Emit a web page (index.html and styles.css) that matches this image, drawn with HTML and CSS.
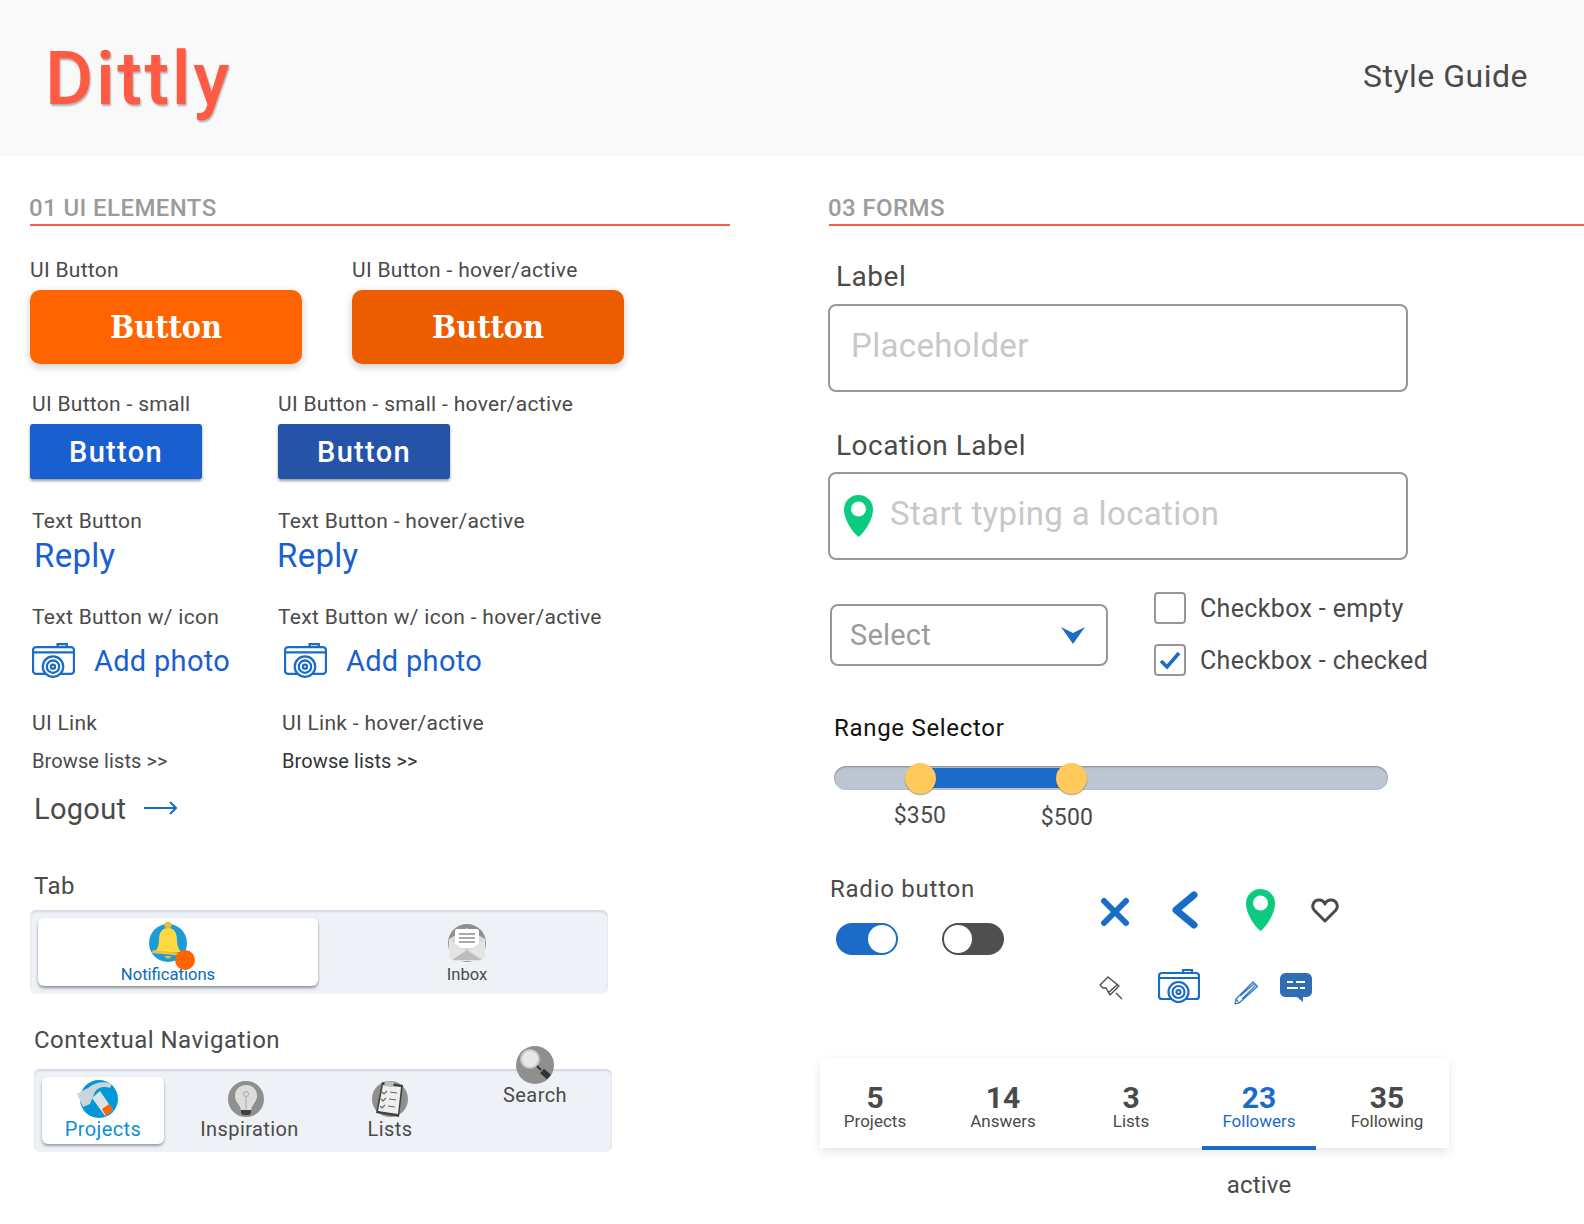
FILE: index.html
```html
<!DOCTYPE html>
<html lang="en">
<head>
    <meta charset="UTF-8">
    <title>Dittly Style Guide</title>
    <link rel="stylesheet" href="styles.css">
</head>
<body>
    <svg class="sprites" width="0" height="0">
        <symbol id="camera" viewBox="0 0 42 34">
            <g fill="none" stroke="currentColor" stroke-width="2.200">
                <rect x="1" y="4" width="40" height="26" rx="3"/>
                <path d="M1 9h40M25 4V1h9v3"/>
                <circle cx="20.500" cy="23" r="10" fill="#fff"/>
                <circle cx="20.500" cy="23" r="6"/>
                <circle cx="20.500" cy="23" r="2"/>
            </g>
        </symbol>
        <symbol id="pin" viewBox="0 0 29 42">
            <path fill="#0acb7e" d="M14.500 0C6.500 0 0 6.300 0 14.500 0 25 9 38 14.500 42 20 38 29 25 29 14.500 29 6.300 22.500 0 14.500 0z"/>
            <circle cx="14.500" cy="14" r="7.500" fill="#fff"/>
        </symbol>
    </svg>

    <header class="top-bar">
        <div class="logo">Dittly</div>
        <div class="guide-title">Style Guide</div>
    </header>

    <main class="columns">
        <section class="col-left">
            <h2 class="section-title">01 UI ELEMENTS</h2>

            <div class="demo-row row-buttons">
                <div>
                    <p class="demo-label">UI Button</p>
                    <a class="btn-large">Button</a>
                </div>
                <div>
                    <p class="demo-label">UI Button - hover/active</p>
                    <a class="btn-large hover">Button</a>
                </div>
            </div>

            <div class="demo-row row-small">
                <div>
                    <p class="demo-label inset">UI Button - small</p>
                    <a class="btn-small">Button</a>
                </div>
                <div>
                    <p class="demo-label">UI Button - small - hover/active</p>
                    <a class="btn-small hover">Button</a>
                </div>
            </div>

            <div class="demo-row row-text">
                <div>
                    <p class="demo-label inset">Text Button</p>
                    <a class="text-btn inset-more">Reply</a>
                </div>
                <div>
                    <p class="demo-label">Text Button - hover/active</p>
                    <a class="text-btn hover">Reply</a>
                </div>
            </div>

            <div class="demo-row row-icon">
                <div>
                    <p class="demo-label inset">Text Button w/ icon</p>
                    <a class="icon-btn inset">
                        <svg class="camera-icon"><use href="#camera"/></svg>
                        <span>Add photo</span>
                    </a>
                </div>
                <div>
                    <p class="demo-label">Text Button w/ icon - hover/active</p>
                    <a class="icon-btn second">
                        <svg class="camera-icon"><use href="#camera"/></svg>
                        <span>Add photo</span>
                    </a>
                </div>
            </div>

            <div class="demo-row row-link">
                <div>
                    <p class="demo-label inset">UI Link</p>
                    <a class="ui-link inset">Browse lists &gt;&gt;</a>
                </div>
                <div>
                    <p class="demo-label">UI Link - hover/active</p>
                    <a class="ui-link dark">Browse lists &gt;&gt;</a>
                </div>
            </div>

            <a class="logout">
                <span>Logout</span>
                <svg class="logout-arrow" width="33" height="14" viewBox="0 0 33 14" fill="none" stroke="#1a6cc8" stroke-width="2"><path d="M0 7h32M26 1l6 6-6 6"/></svg>
            </a>

            <h3 class="group-title tab-title">Tab</h3>
            <div class="tabs">
                <div class="tab active">
                    <span class="tab-icon">
                        <svg width="42" height="42" viewBox="0 0 42 42">
                            <circle cx="21" cy="23" r="19" fill="#1b9cd8"/>
                            <path fill="#ffd83f" d="M21 8c-7 0-9 6-9 12 0 6-2 9-4 12h26c-2-3-4-6-4-12 0-6-2-12-9-12z"/>
                            <path fill="#e9c23c" d="M6 30l30 3v3L5 33zM17 36h8l-4 3z"/>
                            <circle cx="21" cy="5" r="3.500" fill="#e9bc3a"/>
                        </svg>
                        <i class="badge"></i>
                    </span>
                    <span class="tab-text">Notifications</span>
                </div>
                <div class="tab inbox">
                    <span class="tab-icon">
                        <svg width="38" height="38" viewBox="0 0 38 38">
                            <circle cx="19" cy="19" r="19" fill="#8f8f8f"/>
                            <path fill="#d8d8d8" d="M1 15l18-11 18 11v17l-6 5H7l-6-5z"/>
                            <rect x="7" y="5" width="24" height="19" rx="2" fill="#fff"/>
                            <path stroke="#8f8f8f" stroke-width="1.500" d="M11 10h16M11 14h16M11 18h16"/>
                            <path fill="#e4e4e4" d="M1 15l18 13 18-13v17l-5 5H6l-5-5z"/>
                            <path fill="#bdbdbd" d="M4 36l15-10 15 10z"/>
                        </svg>
                    </span>
                    <span class="tab-text">Inbox</span>
                </div>
            </div>

            <h3 class="group-title nav-title">Contextual Navigation</h3>
            <nav class="context-nav">
                <div class="nav-item active item-projects">
                    <svg width="38" height="38" viewBox="0 0 38 38">
                        <circle cx="19" cy="19" r="19" fill="#0098d6"/>
                        <path fill="#c9d4dc" d="M-3 14l7-4 4-2c7-6 16-7 24-4l-2 4c-6-2-12-1-15 4l-5 12-7 3z"/>
                        <path fill="#dbe3e8" d="M12 18l8-7 13 19-8 6z"/>
                        <path fill="#ff6400" d="M22 29l7-5 4 6-7 6z"/>
                    </svg>
                    <span>Projects</span>
                </div>
                <div class="nav-item item-inspiration">
                    <svg width="38" height="38" viewBox="0 0 38 38">
                        <circle cx="19" cy="19" r="18" fill="#8f8f8f"/>
                        <path fill="#dcdcdc" d="M19 5c-7 0-11 5-11 11 0 6 5 8 6 14h10c1-6 6-8 6-14 0-6-4-11-11-11z"/>
                        <path fill="none" stroke="#a8a8a8" d="M19 29V17"/>
                        <circle cx="19" cy="14" r="2.500" fill="none" stroke="#a8a8a8"/>
                        <path fill="#3f3f3f" d="M14 30h10v3l-2 2h-6l-2-2z"/>
                    </svg>
                    <span>Inspiration</span>
                </div>
                <div class="nav-item item-lists">
                    <svg width="38" height="38" viewBox="0 0 38 38">
                        <circle cx="19" cy="19" r="18" fill="#8f8f8f"/>
                        <path fill="#3f3f3f" d="M11 2l21 3-4 32L5 33z"/>
                        <path fill="#efefef" d="M12 5l18 2-3 27L7 31z"/>
                        <path fill="#bdbdbd" d="M14 1l9 1-1 5-9-1z"/>
                        <path fill="none" stroke="#666" stroke-width="1.200" d="M11 12l2 2 3-3M10 19l2 2 3-3M9 26l2 2 3-3M19 12l7 1M18 19l7 1M17 26l7 1"/>
                    </svg>
                    <span>Lists</span>
                </div>
                <div class="nav-item item-search">
                    <svg width="38" height="38" viewBox="0 0 38 38">
                        <circle cx="19" cy="19" r="19" fill="#8f8f8f"/>
                        <circle cx="14" cy="13" r="9" fill="#e8e8e8" stroke="#c8c8c8" stroke-width="2"/>
                        <path stroke="#333" stroke-width="2" d="M21 20l4 4"/>
                        <path stroke="#333" stroke-width="6" d="M26 25l7 6"/>
                    </svg>
                    <span>Search</span>
                </div>
            </nav>
        </section>

        <section class="col-right">
            <h2 class="section-title">03 FORMS</h2>

            <label class="form-label first">Label</label>
            <div class="field"><span>Placeholder</span></div>

            <label class="form-label second">Location Label</label>
            <div class="field location">
                <svg class="field-pin"><use href="#pin"/></svg>
                <span>Start typing a location</span>
            </div>

            <div class="select-row">
                <div class="select">
                    <span>Select</span>
                    <svg width="24" height="18" viewBox="0 0 24 18"><path fill="#1a6cc8" d="M0 1l12 6 12-6-12 17z"/></svg>
                </div>
                <div class="checks">
                    <div class="check-row">
                        <span class="checkbox"></span>
                        <span>Checkbox - empty</span>
                    </div>
                    <div class="check-row">
                        <span class="checkbox">
                            <svg width="22" height="20" viewBox="0 0 22 20" fill="none" stroke="#1a6cc8" stroke-width="3.500"><path d="M2 11l6 6L20 3"/></svg>
                        </span>
                        <span>Checkbox - checked</span>
                    </div>
                </div>
            </div>

            <h3 class="range-title">Range Selector</h3>
            <div class="range">
                <div class="range-fill"></div>
                <span class="thumb thumb-low"></span>
                <span class="thumb thumb-high"></span>
            </div>
            <div class="range-values">
                <span class="value-low">$350</span>
                <span class="value-high">$500</span>
            </div>

            <div class="controls-row">
                <div class="toggles-col">
                    <h3 class="toggle-title">Radio button</h3>
                    <div class="toggles">
                        <span class="toggle on"></span>
                        <span class="toggle off"></span>
                    </div>
                </div>
                <div class="icon-set">
                    <div class="icon-row first-icons">
                        <svg class="ic-x" width="30" height="30" viewBox="0 0 30 30" fill="none" stroke="#1a6cc8" stroke-width="6" stroke-linecap="round"><path d="M4 4l22 22M26 4L4 26"/></svg>
                        <svg class="ic-back" width="28" height="38" viewBox="0 0 28 38" fill="none" stroke="#1a6cc8" stroke-width="7" stroke-linecap="round" stroke-linejoin="round"><path d="M23 4L5 19l18 15"/></svg>
                        <svg class="ic-pin"><use href="#pin"/></svg>
                        <svg class="ic-heart" width="28" height="25" viewBox="0 0 28 25" fill="none" stroke="#4a4a4a" stroke-width="3" stroke-linejoin="round"><path d="M14 23L3.500 12.500C0 9 2 2 8 2c3 0 5 1.500 6 4 1-2.500 3-4 6-4 6 0 8 7 4.500 10.500z"/></svg>
                    </div>
                    <div class="icon-row second-icons">
                        <svg class="ic-tack" width="24" height="24" viewBox="0 0 24 24" fill="none" stroke="#4a4a4a" stroke-width="1.400" stroke-linejoin="round"><path d="M9 1L1 9l3 3h3l4 7 9-9-11-9zM9 17l10-9M17 17l6 6"/></svg>
                        <svg class="ic-camera"><use href="#camera"/></svg>
                        <svg class="ic-pencil" width="24" height="24" viewBox="0 0 24 24" fill="#fff" stroke="#2f76c8" stroke-width="1.200" stroke-linejoin="round"><path d="M19 1l4.500 4.500L5 22l-4 1 1-5zM2 18l3 4M6 15L20.500 2.500M8 18L22 4"/></svg>
                        <svg class="ic-chat" width="32" height="29" viewBox="0 0 32 29"><path fill="#2f6db5" d="M6 0h20c3 0 6 2 6 6v13c0 3-3 5-6 5h-3v5l-6-5H6c-3 0-6-2-6-5V6c0-4 3-6 6-6z"/><path stroke="#fff" stroke-width="2" d="M7 9h6M16 9h9M7 15h11M20 15h5"/></svg>
                    </div>
                </div>
            </div>

            <div class="stats">
                <div class="stat"><b>5</b><span>Projects</span></div>
                <div class="stat"><b>14</b><span>Answers</span></div>
                <div class="stat"><b>3</b><span>Lists</span></div>
                <div class="stat active"><b>23</b><span>Followers</span></div>
                <div class="stat"><b>35</b><span>Following</span></div>
            </div>
            <p class="stats-note">active</p>
        </section>
    </main>
</body>
</html>
```

FILE: styles.css
```css
* {
    box-sizing: border-box;
}

body {
    margin: 0;
    background: #fff;
    color: #4a4a4a;
    font-family: Roboto, Arial, sans-serif;
}

p, h2, h3 {
    margin: 0;
    font-weight: 400;
}

.sprites {
    display: block;
    height: 0;
}

.top-bar {
    height: 156px;
    background: #f9f9f9;
    display: flex;
    align-items: center;
    justify-content: space-between;
    padding: 0 56px 0 45px;
}

.logo {
    margin-top: 1px;
    color: #ff5a43;
    font-size: 74px;
    font-weight: 500;
    letter-spacing: 2.600px;
    text-shadow: 1px 2px 2px rgba(0, 0, 0, 0.3);
}

.guide-title {
    margin-bottom: 4px;
    font-size: 32px;
    letter-spacing: 0.5px;
}

.columns {
    display: flex;
}

.col-left {
    width: 700px;
    margin-left: 30px;
}

.col-right {
    flex: 1;
    margin-left: 99px;
}

.section-title {
    margin-top: 38px;
    height: 32px;
    padding-bottom: 2px;
    border-bottom: 2px solid #ff5a43;
    color: #9b9b9b;
    font-size: 24px;
    line-height: 28px;
    font-weight: 500;
    letter-spacing: 0.4px;
    text-indent: -1px;
}

.demo-row {
    display: grid;
}

.demo-label {
    font-size: 21px;
    letter-spacing: 0.3px;
    line-height: 24px;
}

.inset {
    margin-left: 2px;
}

.inset-more {
    margin-left: 4px;
}

.row-buttons {
    grid-template-columns: 322px auto;
    margin-top: 32px;
}

.row-buttons .demo-label {
    margin-bottom: 8px;
}

.btn-large {
    display: block;
    width: 272px;
    height: 74px;
    border-radius: 10px;
    background: #ff6400;
    color: #fff;
    font-family: "DejaVu Serif", serif;
    font-stretch: condensed;
    font-size: 32px;
    font-weight: 700;
    line-height: 74px;
    text-align: center;
    box-shadow: 0 3px 8px rgba(0, 0, 0, 0.2);
}

.btn-large.hover {
    background: #ee5c00;
}

.row-small {
    grid-template-columns: 248px auto;
    margin-top: 28px;
}

.row-small .demo-label {
    margin-bottom: 8px;
}

.btn-small {
    display: block;
    width: 172px;
    height: 55px;
    border-radius: 3px;
    background: #1a5fd0;
    color: #fff;
    font-size: 29px;
    font-weight: 500;
    letter-spacing: 1.300px;
    line-height: 57px;
    text-align: center;
    box-shadow: 0 2px 3px rgba(0, 0, 0, 0.4);
}

.btn-small.hover {
    background: #2553a8;
}

.row-text {
    grid-template-columns: 248px auto;
    margin-top: 30px;
}

.row-text .demo-label {
    margin-bottom: 4px;
}

.text-btn {
    display: block;
    color: #1a5fd0;
    font-size: 33px;
    letter-spacing: 0.3px;
    line-height: 38px;
}

.text-btn.hover {
    margin-left: -1px;
}

.row-icon {
    grid-template-columns: 248px auto;
    margin-top: 30px;
}

.row-icon .demo-label {
    margin-bottom: 14px;
}

.icon-btn {
    display: flex;
    align-items: center;
    height: 35px;
    gap: 19px;
    color: #1a5fd0;
    font-size: 29px;
    letter-spacing: 0.3px;
}

.icon-btn.second {
    margin-left: 6px;
}

.camera-icon {
    width: 43px;
    height: 35px;
    color: #1a6cc8;
}

.row-link {
    grid-template-columns: 252px auto;
    margin-top: 33px;
}

.row-link .demo-label {
    margin-bottom: 14px;
}

.ui-link {
    display: block;
    font-size: 20px;
    letter-spacing: 0.1px;
    line-height: 24px;
}

.ui-link.dark {
    color: #333;
}

.logout {
    display: flex;
    align-items: center;
    gap: 18px;
    height: 36px;
    margin: 18px 0 0 4px;
    font-size: 29px;
    letter-spacing: 0.3px;
}

.logout-arrow {
    margin-top: -3px;
}

.group-title {
    margin-left: 4px;
    font-size: 24px;
    letter-spacing: 0.5px;
    line-height: 30px;
}

.tab-title {
    margin-top: 44px;
}

.tabs {
    display: flex;
    width: 578px;
    height: 84px;
    margin-top: 9px;
    padding: 8px;
    border-radius: 6px;
    background: #eef2f7;
    box-shadow: inset 0 2px 2px rgba(120, 140, 170, 0.25);
}

.tab {
    display: flex;
    flex-direction: column;
    align-items: center;
    height: 68px;
    padding-top: 6px;
}

.tab.active {
    width: 280px;
    padding-right: 20px;
    border-radius: 6px;
    background: #fff;
    box-shadow: 0 2px 3px rgba(0, 0, 0, 0.4);
}

.tab.inbox {
    flex: 1;
    padding-left: 16px;
}

.tab-icon {
    position: relative;
    display: block;
    height: 38px;
}

.tab-icon svg {
    display: block;
}

.tab.active .tab-icon svg {
    margin-top: -4px;
}

.badge {
    position: absolute;
    left: 28px;
    top: 26px;
    width: 20px;
    height: 20px;
    border-radius: 50%;
    background: #ff6400;
}

.tab-text {
    margin-top: 3px;
    font-size: 16.600px;
    line-height: 20px;
}

.tab.active .tab-text {
    color: #0a6ab8;
}

.nav-title {
    margin-top: 31px;
}

.context-nav {
    display: flex;
    width: 578px;
    height: 83px;
    margin: 14px 0 0 4px;
    padding: 8px;
    border-radius: 6px;
    background: #eef2f7;
    box-shadow: inset 0 2px 2px rgba(120, 140, 170, 0.25);
}

.nav-item {
    display: flex;
    flex-direction: column;
    align-items: center;
    height: 67px;
    padding-top: 3px;
    font-size: 20px;
    letter-spacing: 0.4px;
    line-height: 22px;
}

.nav-item svg {
    display: block;
    overflow: visible;
}

.nav-item.active {
    border-radius: 6px;
    background: #fff;
    color: #0f8fd0;
    box-shadow: 0 2px 3px rgba(0, 0, 0, 0.35);
}

.item-projects {
    width: 122px;
}

.item-projects svg,
.item-inspiration svg {
    margin-right: 8px;
}

.item-inspiration {
    width: 171px;
}

.item-lists {
    width: 110px;
}

.item-search {
    width: 130px;
    margin: -31px 0 0 25px;
    height: auto;
    padding-top: 0;
}

.form-label {
    display: block;
    margin: 37px 0 12px 7px;
    font-size: 28px;
    letter-spacing: 0.5px;
    line-height: 30px;
}

.form-label.first {
    margin-top: 36px;
}

.form-label.second {
    margin: 39px 0 11px 7px;
}

.field {
    display: flex;
    align-items: center;
    width: 580px;
    height: 88px;
    margin-left: -1px;
    padding: 0 21px 6px;
    border: 2px solid #979797;
    border-radius: 8px;
    color: #c8c8c8;
    font-size: 33px;
    letter-spacing: 0.35px;
}

.field.location {
    padding-left: 14px;
}

.field-pin {
    width: 29px;
    height: 42px;
    margin: 6px 17px 0 0;
}

.select-row {
    display: flex;
    margin-top: 32px;
}

.select {
    display: flex;
    align-items: center;
    justify-content: space-between;
    width: 278px;
    height: 62px;
    margin: 12px 0 0 1px;
    padding: 0 21px 0 18px;
    border: 2px solid #979797;
    border-radius: 8px;
    color: #9b9b9b;
    font-size: 29px;
    letter-spacing: 0.2px;
}

.checks {
    margin-left: 46px;
}

.check-row {
    display: flex;
    align-items: center;
    gap: 14px;
    height: 32px;
    font-size: 25px;
    letter-spacing: 0.35px;
}

.check-row + .check-row {
    margin-top: 20px;
}

.checkbox {
    display: flex;
    align-items: center;
    justify-content: center;
    width: 32px;
    height: 32px;
    border: 2px solid #979797;
    border-radius: 4px;
}

.range-title {
    margin: 38px 0 0 5px;
    color: #111;
    font-size: 24px;
    letter-spacing: 0.7px;
    line-height: 28px;
}

.range {
    position: relative;
    width: 554px;
    height: 24px;
    margin: 24px 0 0 5px;
    border-radius: 12px;
    background: #bcc5d2;
    box-shadow: inset 0 1px 2px rgba(0, 0, 0, 0.3);
}

.range-fill {
    position: absolute;
    left: 86px;
    top: 2px;
    width: 151px;
    height: 20px;
    background: #1b6cc8;
}

.thumb {
    position: absolute;
    top: -3px;
    width: 31px;
    height: 31px;
    border-radius: 50%;
    background: #ffc95c;
    box-shadow: 0 1px 1px rgba(0, 0, 0, 0.4);
}

.thumb-low {
    left: 71px;
}

.thumb-high {
    left: 222px;
}

.range-values {
    display: flex;
    margin: 13px 0 0 5px;
    font-size: 23px;
    letter-spacing: 0.2px;
    line-height: 26px;
}

.range-values span {
    width: 60px;
    text-align: center;
}

.value-low {
    margin-left: 56px;
}

.value-high {
    margin: 2px 0 0 87px;
}

.controls-row {
    display: flex;
    margin-top: 44px;
}

.toggles-col {
    width: 270px;
    margin-left: 1px;
}

.toggle-title {
    font-size: 24px;
    letter-spacing: 0.75px;
    line-height: 28px;
}

.toggles {
    display: flex;
    gap: 44px;
    margin: 20px 0 0 6px;
}

.toggle {
    position: relative;
    width: 62px;
    height: 32px;
    border-radius: 16px;
    background: #1a6cc8;
}

.toggle::after {
    content: "";
    position: absolute;
    top: 2px;
    right: 2px;
    width: 28px;
    height: 28px;
    border-radius: 50%;
    background: #fff;
}

.toggle.off {
    background: #4f4f4f;
}

.toggle.off::after {
    right: auto;
    left: 2px;
}

.icon-set {
    margin-top: 14px;
}

.icon-row {
    display: flex;
    align-items: center;
}

.first-icons {
    height: 42px;
}

.ic-x {
    margin-top: 4px;
}

.ic-back {
    margin-left: 41px;
}

.ic-pin {
    width: 29px;
    height: 42px;
    margin-left: 47px;
}

.ic-heart {
    margin-left: 36px;
}

.second-icons {
    height: 34px;
    margin-top: 38px;
}

.ic-tack {
    margin: 3px 0 0 -1px;
}

.ic-camera {
    width: 42px;
    height: 34px;
    margin-left: 35px;
    color: #1a6cc8;
}

.ic-pencil {
    margin: 14px 0 0 34px;
}

.ic-chat {
    margin: 2px 0 0 22px;
}

.stats {
    display: flex;
    gap: 14px;
    width: 629px;
    height: 90px;
    margin: 55px 0 0 -9px;
    background: #fff;
    box-shadow: 0 4px 10px rgba(0, 0, 0, 0.1);
}

.stat {
    display: flex;
    flex-direction: column;
    align-items: center;
    flex: none;
    width: 114px;
    height: 92px;
    padding-top: 27px;
    font-size: 17px;
    line-height: 20px;
}

.stat:first-child {
    margin-left: -2px;
}

.stat b {
    font-size: 30px;
    line-height: 26px;
}

.stat.active {
    color: #1a6cc8;
    border-bottom: 4px solid #1a6cc8;
}

.stats-note {
    width: 114px;
    margin: 23px 0 0 373px;
    font-size: 24px;
    letter-spacing: 0.2px;
    line-height: 28px;
    text-align: center;
}
```
